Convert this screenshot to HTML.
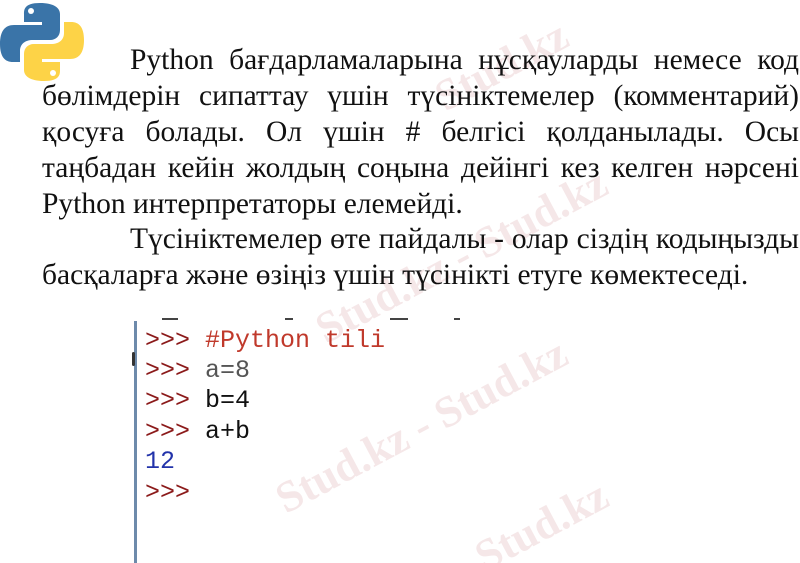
<!DOCTYPE html>
<html><head><meta charset="utf-8"><style>
html,body{margin:0;padding:0;background:#fff;width:800px;height:563px;overflow:hidden;position:relative;font-family:"Liberation Serif",serif;}
.wrap{position:absolute;left:0;top:0;width:800px;height:563px;overflow:hidden;}
.l{position:absolute;left:42px;width:757px;font-size:29.5px;line-height:32px;color:#111;white-space:nowrap;}
.j{text-align:justify;text-align-last:justify;white-space:normal;}
.wm{position:absolute;color:rgba(215,160,165,0.25);font-family:"Liberation Serif",serif;font-weight:bold;font-size:44px;transform:rotate(-28deg);white-space:nowrap;}
.c{position:absolute;left:145px;font-family:"Liberation Mono",monospace;font-size:25px;line-height:26px;white-space:pre;}
.p{color:#8b1a1a}
</style></head><body><div class="wrap">
<div class="wm" style="left:430px;top:40px">Stud.kz</div>
<div class="wm" style="left:300px;top:230px">Stud.kz - Stud.kz</div>
<div class="wm" style="left:260px;top:400px">Stud.kz - Stud.kz</div>
<div class="wm" style="left:470px;top:500px">Stud.kz</div>

<svg style="position:absolute;left:0;top:0" width="84" height="84" viewBox="0 0 84 84">
<path d="M40 3C24 3 24 10 24 14V22H42V25H14C5 25 0 31 0 44C0 57 5 62 13 62H20V51C20 44 25 40 33 40H50C56 40 60 36 60 30V14C60 8 54 3 40 3Z" fill="#3a74a8"/>
<circle cx="31" cy="11" r="3" fill="#fff"/>
<path d="M44 81C60 81 60 74 60 70V62H42V59H70C79 59 84 53 84 40C84 27 79 22 71 22H64V33C64 40 59 44 51 44H34C28 44 24 48 24 54V70C24 76 30 81 44 81Z" fill="#fdd347"/>
<circle cx="53" cy="73" r="3" fill="#fff"/>
</svg>

<div class="l j" style="top:44px;left:130px;width:669px">Python бағдарламаларына нұсқауларды немесе код</div>
<div class="l j" style="top:80px">бөлімдерін сипаттау үшін түсініктемелер (комментарий)</div>
<div class="l j" style="top:116px">қосуға болады. Ол үшін # белгісі қолданылады. Осы</div>
<div class="l j" style="top:152px">таңбадан кейін жолдың соңына дейінгі кез келген нәрсені</div>
<div class="l" style="top:188px">Python интерпретаторы елемейді.</div>
<div class="l j" style="top:223px;left:130px;width:669px">Түсініктемелер өте пайдалы - олар сіздің кодыңызды</div>
<div class="l" style="top:259px">басқаларға және өзіңіз үшін түсінікті етуге көмектеседі.</div>

<div style="position:absolute;left:134px;top:321px;width:3px;height:242px;background:#6d8aab"></div>
<div style="position:absolute;left:132px;top:352px;width:3px;height:14px;background:#333;border-radius:2px"></div>
<div style="position:absolute;left:162px;top:318px;width:16px;height:2px;background:#444"></div>
<div style="position:absolute;left:285px;top:318px;width:8px;height:2px;background:#444"></div>
<div style="position:absolute;left:390px;top:318px;width:18px;height:2px;background:#444"></div>
<div style="position:absolute;left:454px;top:318px;width:6px;height:2px;background:#444"></div>
<div class="c" style="top:328px"><span class="p">&gt;&gt;&gt; </span><span style="color:#c0392b">#Python tili</span></div>
<div class="c" style="top:358px"><span class="p">&gt;&gt;&gt; </span><span style="color:#555">a=8</span></div>
<div class="c" style="top:388px"><span class="p">&gt;&gt;&gt; </span><span style="color:#111">b=4</span></div>
<div class="c" style="top:419px"><span class="p">&gt;&gt;&gt; </span><span style="color:#111">a+b</span></div>
<div class="c" style="top:449px;color:#2233aa">12</div>
<div class="c p" style="top:480px">&gt;&gt;&gt;</div>
</div></body></html>
